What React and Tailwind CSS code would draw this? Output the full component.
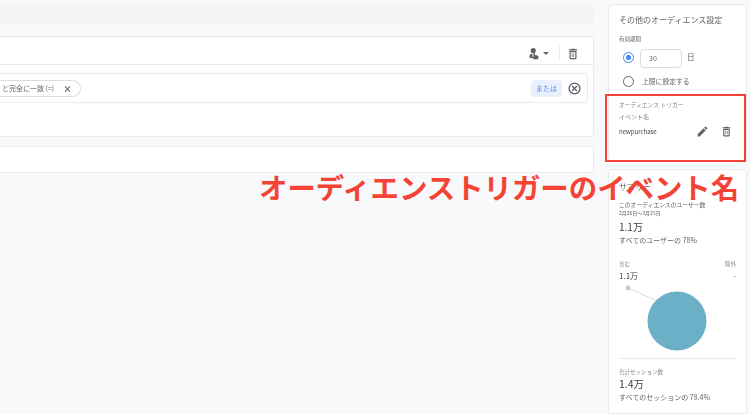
const TrashIcon = ({ className }) => (
  <svg viewBox="0 0 24 24" className={className} fill="currentColor">
    <path d="M6 19c0 1.1.9 2 2 2h8c1.1 0 2-.9 2-2V7H6v12zM8 9h8v10H8V9zm7.5-5l-1-1h-5l-1 1H5v2h14V4h-3.5z" />
    <path d="M10 11h1.2v6H10zM12.8 11H14v6h-1.2z" />
  </svg>
);

const PencilIcon = ({ className }) => (
  <svg viewBox="0 0 24 24" className={className} fill="currentColor">
    <path d="M3 17.25V21h3.75L17.81 9.94l-3.75-3.75L3 17.25zM20.71 7.04c.39-.39.39-1.02 0-1.41l-2.34-2.34c-.39-.39-1.02-.39-1.41 0l-1.83 1.83 3.75 3.75 1.83-1.83z" />
  </svg>
);

const PersonTouchIcon = ({ className }) => (
  <svg viewBox="0 0 24 24" className={className} fill="currentColor">
    <circle cx="10.5" cy="6" r="5.2" />
    <path d="M3 17c0-3 3-4.6 6-4.8V21H4.500C3.600 21 3 20.300 3 19.500V17z" />
    <path d="M11 11.500a1.500 1.500 0 0 1 3 0V15l5 1c1.300.3 2 1.300 2 2.500 0 2-.5 3.500-1.200 5H11.500L6.500 19l1.200-1.200L11 19.200v-7.700z" />
  </svg>
);

const CancelIcon = ({ className }) => (
  <svg viewBox="0 0 24 24" className={className} fill="none" stroke="currentColor" strokeWidth="2.400">
    <circle cx="12" cy="12" r="10" />
    <path d="M7.500 7.500l9 9M16.500 7.500l-9 9" />
  </svg>
);

const App = () => {
  return (
    <div className="relative w-[750px] h-[414px] overflow-hidden bg-[#f8f9fa] flex text-[#5f6368] font-['Noto_Sans_CJK_JP','Noto_Sans',sans-serif]">
      <main className="w-[594px] pt-1 shrink-0 blur-[0.4px]">
        <div className="h-5 bg-[#f1f3f4] rounded-r" />

        <section className="mt-3 h-[101px] bg-white border border-l-0 border-[#e8eaed] rounded-r">
          <div className="h-[28px] pt-[6px] border-b border-[#e8eaed] flex items-center justify-end pr-[13px]">
            <PersonTouchIcon className="w-[12px] h-[13px] text-[#5f6368]" />
            <span className="ml-[3px] w-0 h-0 border-x-[3px] border-x-transparent border-t-[3px] border-t-[#5f6368]" />
            <span className="ml-[10px] mr-[6px] w-px h-[15px] bg-[#e8eaed]" />
            <TrashIcon className="w-[14px] h-[14px] text-[#5f6368]" />
          </div>
          <div className="mt-2 mr-[5px] h-[30px] border border-l-0 border-[#e8eaed] rounded-r flex items-center justify-between pr-[6px]">
            <div className="h-[17px] pl-[2px] pr-[8px] w-[81px] border border-l-0 border-[#dadce0] rounded-r-full flex items-center justify-between text-[7px] leading-none whitespace-nowrap">
              <span>と完全に一致 (=)</span>
              <span className="text-[9px] font-bold">×</span>
            </div>
            <div className="flex items-center gap-[6px]">
              <span className="w-[31px] h-[17px] bg-[#e8f0fe] text-[#5a8fee] rounded-sm text-[7px] leading-none flex items-center justify-center">または</span>
              <CancelIcon className="w-[13px] h-[13px] text-[#5f6368]" />
            </div>
          </div>
        </section>

        <section className="mt-[9px] h-[27px] bg-white border border-l-0 border-[#e8eaed] rounded-r" />
      </main>

      <aside className="ml-[14px] w-[139px] pt-1 flex flex-col gap-[8px] shrink-0 blur-[0.4px]">
        <section className="h-[157px] bg-white border border-[#e8eaed] rounded pl-[10px] pt-[10px] text-[#5f6368]">
          <h2 className="text-[8px] leading-[10px] whitespace-nowrap">その他のオーディエンス設定</h2>
          <p className="mt-[11px] text-[5.5px] leading-[6px]">有効期間</p>
          <div className="mt-[7px] flex items-center">
            <span className="ml-[4px] w-[11px] h-[11px] -mt-[3px] rounded-full border border-[#4285f4] flex items-center justify-center">
              <span className="w-[5px] h-[5px] rounded-full bg-[#4285f4]" />
            </span>
            <span className="ml-[6px] w-[42px] h-[19px] border border-[#dadce0] rounded-sm pl-[8px] text-[7px] leading-[17px]">30</span>
            <span className="ml-[5px] -mt-[3px] text-[7.5px] leading-none">日</span>
          </div>
          <div className="mt-[8px] flex items-center">
            <span className="ml-[4px] w-[11px] h-[11px] rounded-full border border-[#5f6368]" />
            <span className="ml-[8px] text-[6.8px] leading-none whitespace-nowrap">上限に設定する</span>
          </div>
          <p className="mt-[15px] text-[5.8px] leading-[6px] text-[#80868b] whitespace-nowrap">オーディエンス トリガー</p>
          <p className="mt-[5px] text-[6px] leading-[7px] text-[#80868b]">イベント名</p>
          <div className="mt-[5px] flex items-center justify-between pr-[13px]">
            <span className="text-[6px] leading-[8px] text-[#3c4043]">newpurchase</span>
            <div className="flex items-center gap-[11px]">
              <PencilIcon className="w-[13px] h-[13px] text-[#5f6368]" />
              <TrashIcon className="w-[13px] h-[13px] text-[#5f6368]" />
            </div>
          </div>
        </section>

        <section className="flex-1 bg-white border border-[#e8eaed] rounded-t px-[10px] pt-[12px]">
          <h2 className="text-[8px] leading-[10px]">サマリー</h2>
          <p className="mt-[9px] text-[5.8px] leading-[7px] whitespace-nowrap">このオーディエンスのユーザー数</p>
          <p className="mt-[1px] text-[5px] leading-[7px] whitespace-nowrap">2月26日～3月25日</p>
          <p className="mt-[4px] text-[10px] leading-[13px] text-[#3c4043]">1.1万</p>
          <p className="mt-[2px] text-[7px] leading-[10px] whitespace-nowrap">すべてのユーザーの 78%</p>
          <div className="mt-[16px] flex justify-between text-[5.5px] leading-[7px] text-[#80868b]">
            <span>含む</span>
            <span>除外</span>
          </div>
          <div className="mt-[2px] flex justify-between text-[8px] leading-[12px] text-[#3c4043]">
            <span>1.1万</span>
            <span className="text-[#80868b]">-</span>
          </div>
          <svg viewBox="0 0 118 76" className="block w-[118px] h-[76px] mt-[2px]">
            <path d="M9 4L36 16" stroke="#dadce0" strokeWidth="1" />
            <circle cx="9" cy="4" r="2.400" fill="#c4c7cb" />
            <circle cx="58" cy="37" r="29.500" fill="#6bb0c7" />
          </svg>
          <div className="mt-[-2px] h-px bg-[#e8eaed]" />
          <p className="mt-[10px] text-[5.500px] leading-[7px] text-[#80868b] whitespace-nowrap">合計セッション数</p>
          <p className="mt-[1px] text-[10.5px] leading-[14px] text-[#3c4043]">1.4万</p>
          <p className="mt-[1px] text-[7px] leading-[10px] whitespace-nowrap">すべてのセッションの 78.4%</p>
        </section>
      </aside>

      <div className="absolute left-[605px] top-[94px] w-[141px] h-[68px] border-2 border-[#f44336]" />
      <p className="absolute left-[259px] top-[167px] text-[28.4px] leading-[40px] font-bold text-[#f44336] whitespace-nowrap">
        オーディエンストリガーのイベント名
      </p>
    </div>
  );
};

export default App;
